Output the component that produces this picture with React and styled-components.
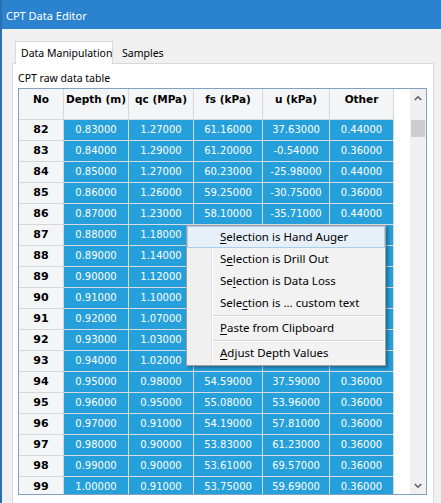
import React from "react";
import styled, { createGlobalStyle } from "styled-components";

const GlobalStyle = createGlobalStyle`
  html, body { margin: 0; padding: 0; background: #f0f0f0; }
  #root { width: 441px; height: 503px; overflow: hidden; }
  * { box-sizing: border-box; }
`;

const UI = `"Noto Sans", "Open Sans", sans-serif`;
const GRIDFONT = `"DejaVu Sans", Verdana, sans-serif`;

const Window = styled.div`
  position: relative;
  width: 441px;
  height: 503px;
  display: flex;
  flex-direction: column;
  border-left: 2px solid #2a6fb0;
  background: #f0f0f0;
  overflow: hidden;
`;

const TitleBar = styled.div`
  height: 29px;
  flex: none;
  background: #2b83cf;
  color: #ffffff;
  font-family: ${UI};
  font-size: 11px;
  padding-left: 4px;
  padding-top: 1px;
  display: flex;
  align-items: center;
`;

const Client = styled.div`
  flex: 1;
  display: flex;
  flex-direction: column;
  padding: 12px 7px 0 10px;
  min-height: 0;
`;

const TabStrip = styled.div`
  display: flex;
  align-items: flex-end;
  height: 22px;
  padding-left: 3px;
  flex: none;
`;

const Tab = styled.div`
  font-family: ${UI};
  font-size: 10.5px;
  color: #000;
  display: flex;
  align-items: center;
  white-space: nowrap;
  flex: none;
  ${(p) =>
    p.$active
      ? `
    height: 23px;
    margin-bottom: -1px;
    background: #ffffff;
    border: 1px solid #d9d9d9;
    border-bottom: none;
    padding: 0 5px 1px 5px;
    width: 98px;
    position: relative;
    z-index: 1;
  `
      : `
    height: 20px;
    padding: 0 7px 0 9px;
    background: transparent;
  `}
`;

const Panel = styled.div`
  flex: 1;
  min-height: 0;
  background: #ffffff;
  border: 1px solid #d9d9d9;
  border-bottom: none;
  padding: 6px 6px 0 5px;
  display: flex;
  flex-direction: column;
`;

const Label = styled.div`
  font-family: ${UI};
  font-size: 10.5px;
  line-height: 16px;
  height: 16px;
  color: #000;
  margin-bottom: 2px;
  white-space: nowrap;
`;

const Grid = styled.div`
  height: 407px;
  width: 409px;
  flex: none;
  border: 1px solid #82a0c0;
  display: flex;
  background: #ffffff;
  overflow: hidden;
`;

const TableArea = styled.div`
  flex: 1;
  overflow: hidden;
  font-family: ${GRIDFONT};
  font-size: 10px;
`;

const COLS = "45px 65px 65px 69px 67px 64px";

const Row = styled.div`
  display: grid;
  grid-template-columns: ${COLS};
  width: 375px;
`;

const HeadCell = styled.div`
  height: 31px;
  background: #f4f5f7;
  border-right: 1px solid #d7d7d7;
  border-bottom: 1px solid #d7d7d7;
  font-weight: bold;
  font-size: 10.5px;
  color: #000;
  text-align: center;
  padding-top: 4px;
  line-height: 12px;
  white-space: nowrap;
`;

const NoCell = styled.div`
  height: 21px;
  background: #f4f5f7;
  border-right: 1px solid #d7d7d7;
  border-bottom: 1px solid #d7d7d7;
  font-weight: bold;
  font-size: 11px;
  color: #000;
  text-align: center;
  line-height: 20px;
`;

const Cell = styled.div`
  height: 21px;
  background: #26a0da;
  border-right: 1px solid #d6dbe0;
  border-bottom: 1px solid #d6dbe0;
  color: #ffffff;
  text-align: center;
  line-height: 20px;
  white-space: nowrap;
`;

const Scrollbar = styled.div`
  width: 16px;
  flex: none;
  background: #f0f0f0;
  display: flex;
  flex-direction: column;
`;

const ScrollButton = styled.div`
  height: 17px;
  flex: none;
  display: flex;
  align-items: center;
  justify-content: center;
`;

const Track = styled.div`
  flex: 1;
  padding-top: 14px;
`;

const Thumb = styled.div`
  height: 17px;
  margin: 0 1px 0 1px;
  background: #cdcdcd;
`;

const Menu = styled.div`
  position: absolute;
  left: 184px;
  top: 225px;
  width: 200px;
  height: 141px;
  border: 1px solid #a0a0a0;
  background: linear-gradient(
    to right,
    #f0f0f0 24px,
    #e2e2e2 24px,
    #e2e2e2 25px,
    #ffffff 25px,
    #ffffff 26px,
    #f2f2f2 26px
  );
  box-shadow: 2px 2px 3px rgba(0, 0, 0, 0.35);
  font-family: ${UI};
  font-size: 11.5px;
  color: #000;
  z-index: 5;
`;

const MenuItem = styled.div`
  height: 22px;
  line-height: 20px;
  padding-left: 32px;
  white-space: nowrap;
  border: 1px solid ${(p) => (p.$hot ? "#a9cdef" : "transparent")};
  background: ${(p) => (p.$hot ? "#e7eff8" : "transparent")};
  u { text-decoration: underline; text-underline-offset: 2px; }
`;

const Separator = styled.div`
  margin: 1px 1px 0 26px;
  height: 2px;
  border-top: 1px solid #d7d7d7;
  border-bottom: 1px solid #ffffff;
`;

const headers = ["No", "Depth (m)", "qc (MPa)", "fs (kPa)", "u (kPa)", "Other"];

// Cells hidden beneath the context menu (fs, u, Other of rows 87-93) are left blank.
const rows = [
  [82, "0.83000", "1.27000", "61.16000", "37.63000", "0.44000"],
  [83, "0.84000", "1.29000", "61.20000", "-0.54000", "0.36000"],
  [84, "0.85000", "1.27000", "60.23000", "-25.98000", "0.44000"],
  [85, "0.86000", "1.26000", "59.25000", "-30.75000", "0.36000"],
  [86, "0.87000", "1.23000", "58.10000", "-35.71000", "0.44000"],
  [87, "0.88000", "1.18000", "", "", ""],
  [88, "0.89000", "1.14000", "", "", ""],
  [89, "0.90000", "1.12000", "", "", ""],
  [90, "0.91000", "1.10000", "", "", ""],
  [91, "0.92000", "1.07000", "", "", ""],
  [92, "0.93000", "1.03000", "", "", ""],
  [93, "0.94000", "1.02000", "", "", ""],
  [94, "0.95000", "0.98000", "54.59000", "37.59000", "0.36000"],
  [95, "0.96000", "0.95000", "55.08000", "53.96000", "0.36000"],
  [96, "0.97000", "0.91000", "54.19000", "57.81000", "0.36000"],
  [97, "0.98000", "0.90000", "53.83000", "61.23000", "0.36000"],
  [98, "0.99000", "0.90000", "53.61000", "69.57000", "0.36000"],
  [99, "1.00000", "0.91000", "53.75000", "59.69000", "0.36000"],
];

const Chevron = ({ up }) => (
  <svg width="8" height="6" viewBox="0 0 8 6">
    <polyline
      points={up ? "0.8,5 4,1.8 7.2,5" : "0.8,1 4,4.2 7.2,1"}
      fill="none"
      stroke="#606060"
      strokeWidth="1.6"
    />
  </svg>
);

export default function App() {
  return (
    <>
      <GlobalStyle />
      <Window>
        <TitleBar>CPT Data Editor</TitleBar>
        <Client>
          <TabStrip>
            <Tab $active>Data Manipulation</Tab>
            <Tab>Samples</Tab>
          </TabStrip>
          <Panel>
            <Label>CPT raw data table</Label>
            <Grid>
              <TableArea>
                <Row>
                  {headers.map((h) => (
                    <HeadCell key={h}>{h}</HeadCell>
                  ))}
                </Row>
                {rows.map((r) => (
                  <Row key={r[0]}>
                    <NoCell>{r[0]}</NoCell>
                    {r.slice(1).map((v, i) => (
                      <Cell key={i}>{v}</Cell>
                    ))}
                  </Row>
                ))}
              </TableArea>
              <Scrollbar>
                <ScrollButton>
                  <Chevron up />
                </ScrollButton>
                <Track>
                  <Thumb />
                </Track>
                <ScrollButton>
                  <Chevron />
                </ScrollButton>
              </Scrollbar>
            </Grid>
          </Panel>
        </Client>
        <Menu>
          <MenuItem $hot>
            <u>S</u>election is Hand Auger
          </MenuItem>
          <MenuItem>
            S<u>e</u>lection is Drill Out
          </MenuItem>
          <MenuItem>
            Se<u>l</u>ection is Data Loss
          </MenuItem>
          <MenuItem>
            Sele<u>c</u>tion is ... custom text
          </MenuItem>
          <Separator />
          <MenuItem>
            <u>P</u>aste from Clipboard
          </MenuItem>
          <Separator />
          <MenuItem>
            <u>A</u>djust Depth Values
          </MenuItem>
        </Menu>
      </Window>
    </>
  );
}
